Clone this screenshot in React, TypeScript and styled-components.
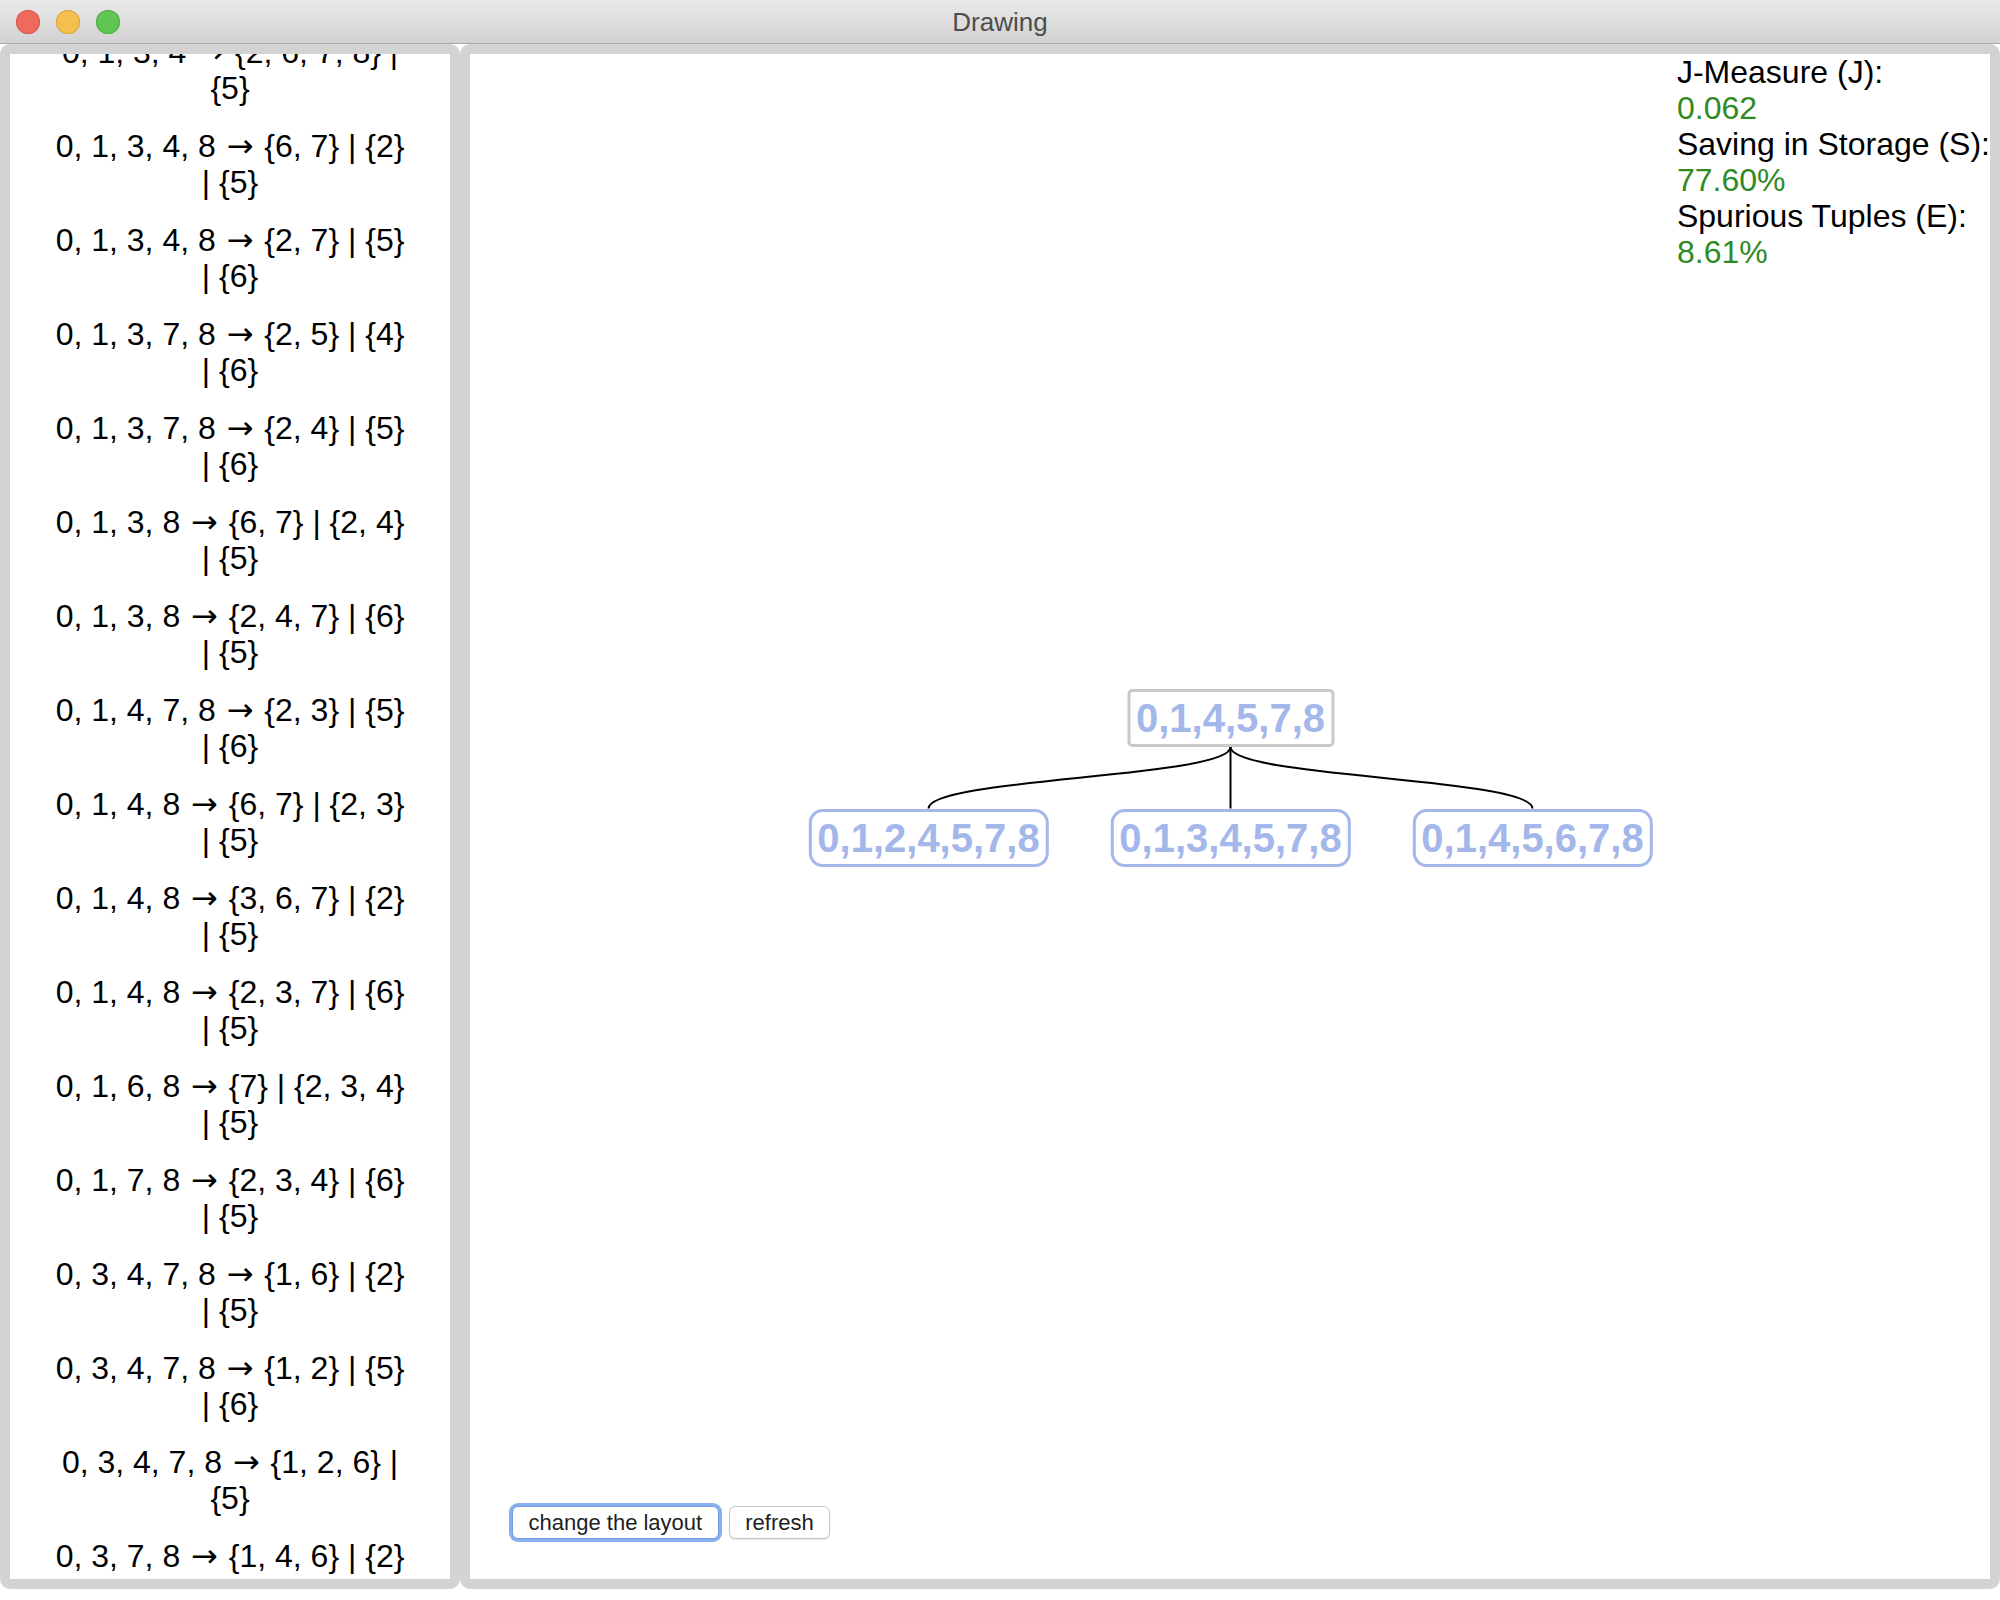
import React, { useLayoutEffect, useRef } from "react";
import styled, { createGlobalStyle } from "styled-components";

const GlobalStyle = createGlobalStyle`
  html, body {
    margin: 0;
    padding: 0;
    background: #ffffff;
  }
  body {
    font-family: "Liberation Sans", Arial, Helvetica, sans-serif;
  }
  #root {
    width: 2000px;
    height: 1600px;
  }
  * {
    box-sizing: border-box;
  }
`;

const Window = styled.div`
  width: 2000px;
  height: 1600px;
  display: flex;
  flex-direction: column;
  background: #ffffff;
  overflow: hidden;
`;

const TitleBar = styled.div`
  flex: 0 0 44px;
  display: grid;
  grid-template-columns: 1fr auto 1fr;
  align-items: center;
  background: linear-gradient(#e9e9e9, #d2d2d2);
  border-bottom: 1px solid #a9a9a9;
`;

const Lights = styled.div`
  display: flex;
  align-items: center;
  gap: 16px;
  padding-left: 16px;
`;

const Light = styled.span<{ $color: string; $edge: string }>`
  width: 24px;
  height: 24px;
  border-radius: 50%;
  background: ${(p) => p.$color};
  box-shadow: inset 0 0 0 1px ${(p) => p.$edge};
`;

const Title = styled.div`
  font-family: "Liberation Sans", Arial, sans-serif;
  font-size: 26px;
  color: #4d4d4d;
  line-height: 30px;
`;

const Content = styled.div`
  flex: 1;
  display: flex;
  padding-bottom: 11px;
  min-height: 0;
`;

const Panel = styled.div`
  border: 10px solid #d3d3d3;
  border-radius: 10px;
  background: #ffffff;
  overflow: hidden;
  min-height: 0;
`;

const LeftPanel = styled(Panel)`
  flex: 0 0 460px;
  display: flex;
  flex-direction: column;
`;

const RightPanel = styled(Panel)`
  flex: 1;
  display: flex;
  flex-direction: column;
`;

const ListScroller = styled.div`
  flex: 1;
  overflow-y: auto;
  scrollbar-width: none;
  &::-webkit-scrollbar {
    display: none;
  }
`;

const DepList = styled.div`
  display: flex;
  flex-direction: column;
  gap: 22px;
  padding-bottom: 22px;
`;

const DepItem = styled.div`
  width: 358px;
  margin: 0 auto;
  text-align: center;
  font-size: 32px;
  line-height: 36px;
  color: #000000;
`;

const Arrow = styled.span`
  display: inline-block;
  font-family: "DejaVu Sans", sans-serif;
  line-height: 1;
  margin: 0 2px;
`;

const Stage = styled.div`
  flex: 1;
  position: relative;
`;

const Edges = styled.svg`
  position: absolute;
  inset: 0;
  width: 100%;
  height: 100%;
  pointer-events: none;
`;

const Node = styled.div<{ $root?: boolean }>`
  position: absolute;
  transform: translate(-50%, -50%);
  padding: 3px 6px;
  border: 3px solid ${(p) => (p.$root ? "#c8c8c8" : "#a3b7ea")};
  border-radius: ${(p) => (p.$root ? "5px" : "14px")};
  background: #ffffff;
  color: #a3b7ea;
  font-family: "Liberation Sans", Arial, sans-serif;
  font-weight: bold;
  font-size: 40px;
  line-height: 46px;
  white-space: nowrap;
`;

const Metrics = styled.div`
  position: absolute;
  top: 0;
  right: 0;
  font-size: 32px;
  line-height: 36px;
  white-space: nowrap;
`;

const MetricLabel = styled.div`
  color: #000000;
`;

const MetricValue = styled.div`
  color: #2f8a24;
`;

const Toolbar = styled.div`
  display: flex;
  align-items: center;
  gap: 10px;
  padding: 0 0 40px 42px;
`;

const Button = styled.button<{ $focused?: boolean }>`
  font-family: "Liberation Sans", Arial, sans-serif;
  font-size: 22px;
  line-height: 25px;
  padding: 3px 15.5px;
  color: #1e1e1e;
  background: #ffffff;
  border: 1px solid ${(p) => (p.$focused ? "#6f9ce9" : "#c6c6c6")};
  border-radius: 6px;
  box-shadow: ${(p) =>
    p.$focused
      ? "0 0 0 3px rgba(125, 166, 236, 0.9)"
      : "0 1px 1px rgba(0, 0, 0, 0.1)"};
  cursor: pointer;
  outline: none;
`;

const dependencies = [
  "0, 1, 3, 4 → {2, 6, 7, 8} | {5}",
  "0, 1, 3, 4, 8 → {6, 7} | {2} | {5}",
  "0, 1, 3, 4, 8 → {2, 7} | {5} | {6}",
  "0, 1, 3, 7, 8 → {2, 5} | {4} | {6}",
  "0, 1, 3, 7, 8 → {2, 4} | {5} | {6}",
  "0, 1, 3, 8 → {6, 7} | {2, 4} | {5}",
  "0, 1, 3, 8 → {2, 4, 7} | {6} | {5}",
  "0, 1, 4, 7, 8 → {2, 3} | {5} | {6}",
  "0, 1, 4, 8 → {6, 7} | {2, 3} | {5}",
  "0, 1, 4, 8 → {3, 6, 7} | {2} | {5}",
  "0, 1, 4, 8 → {2, 3, 7} | {6} | {5}",
  "0, 1, 6, 8 → {7} | {2, 3, 4} | {5}",
  "0, 1, 7, 8 → {2, 3, 4} | {6} | {5}",
  "0, 3, 4, 7, 8 → {1, 6} | {2} | {5}",
  "0, 3, 4, 7, 8 → {1, 2} | {5} | {6}",
  "0, 3, 4, 7, 8 → {1, 2, 6} | {5}",
  "0, 3, 7, 8 → {1, 4, 6} | {2} | {5}",
];

type TreeNode = { label: string; x: number; y: number };

const root: TreeNode = { label: "0,1,4,5,7,8", x: 760.5, y: 663.5 };
const children: TreeNode[] = [
  { label: "0,1,2,4,5,7,8", x: 458.5, y: 783.5 },
  { label: "0,1,3,4,5,7,8", x: 760.5, y: 783.5 },
  { label: "0,1,4,5,6,7,8", x: 1062.5, y: 783.5 },
];

const ROOT_HALF_H = 29.5;
const CHILD_HALF_H = 29;

function edgePath(from: TreeNode, to: TreeNode) {
  const y0 = from.y + ROOT_HALF_H;
  const y1 = to.y - CHILD_HALF_H;
  const ym = (y0 + y1) / 2;
  return `M${from.x},${y0} C${from.x},${ym} ${to.x},${ym} ${to.x},${y1}`;
}

const metrics = [
  { label: "J-Measure (J):", value: "0.062" },
  { label: "Saving in Storage (S):", value: "77.60%" },
  { label: "Spurious Tuples (E):", value: "8.61%" },
];

function Dependency({ text }: { text: string }) {
  const [lhs, rhs] = text.split(" → ");
  return (
    <DepItem>
      {lhs} <Arrow>→</Arrow> {rhs}
    </DepItem>
  );
}

export default function App() {
  const scrollRef = useRef<HTMLDivElement>(null);

  useLayoutEffect(() => {
    if (scrollRef.current) scrollRef.current.scrollTop = 20;
  }, []);

  return (
    <>
      <GlobalStyle />
      <Window>
        <TitleBar>
          <Lights>
            <Light $color="#ee6a5e" $edge="#d65a4f" />
            <Light $color="#f5bf4f" $edge="#d9a53c" />
            <Light $color="#61c554" $edge="#4fae43" />
          </Lights>
          <Title>Drawing</Title>
          <div />
        </TitleBar>
        <Content>
          <LeftPanel>
            <ListScroller ref={scrollRef}>
              <DepList>
                {dependencies.map((d) => (
                  <Dependency key={d} text={d} />
                ))}
              </DepList>
            </ListScroller>
          </LeftPanel>
          <RightPanel>
            <Stage>
              <Edges>
                {children.map((c) => (
                  <path
                    key={c.label}
                    d={edgePath(root, c)}
                    fill="none"
                    stroke="#000"
                    strokeWidth={2}
                  />
                ))}
              </Edges>
              <Node $root style={{ left: root.x, top: root.y }}>
                {root.label}
              </Node>
              {children.map((c) => (
                <Node key={c.label} style={{ left: c.x, top: c.y }}>
                  {c.label}
                </Node>
              ))}
              <Metrics>
                {metrics.map((m) => (
                  <React.Fragment key={m.label}>
                    <MetricLabel>{m.label}</MetricLabel>
                    <MetricValue>{m.value}</MetricValue>
                  </React.Fragment>
                ))}
              </Metrics>
            </Stage>
            <Toolbar>
              <Button $focused>change the layout</Button>
              <Button>refresh</Button>
            </Toolbar>
          </RightPanel>
        </Content>
      </Window>
    </>
  );
}
